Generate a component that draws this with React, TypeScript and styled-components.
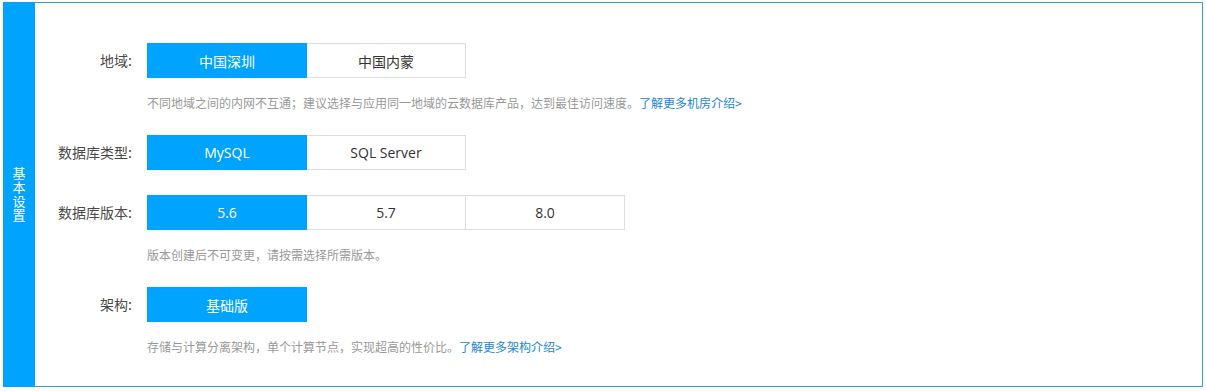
import styled, { createGlobalStyle } from 'styled-components'

const GlobalStyle = createGlobalStyle`
  body {
    margin: 0;
    background: #fff;
    font-family: "Open Sans", "Noto Sans CJK SC", sans-serif;
  }
`

const Panel = styled.div`
  display: flex;
  width: 1200px;
  height: 385px;
  margin: 2px 0 0 3px;
  box-sizing: border-box;
  border: 1px solid #2b9fe6;
  border-left: none;
`

const SideBar = styled.div`
  width: 32px;
  margin: -1px 0;
  background: #00a4ff;
  display: flex;
  align-items: center;
  justify-content: center;
`

const SideTitle = styled.span`
  writing-mode: vertical-rl;
  text-orientation: upright;
  color: #fff;
  font-size: 13px;
  letter-spacing: 1px;
  font-family: "Noto Sans CJK SC", sans-serif;
`

const Content = styled.div`
  flex: 1;
  padding-top: 40px;
`

const FormItem = styled.div<{ $gap?: number }>`
  display: flex;
  margin-bottom: ${p => p.$gap ?? 24}px;
`

const Label = styled.div`
  width: 112px;
  box-sizing: border-box;
  padding-right: 15px;
  text-align: right;
  font-size: 14px;
  line-height: 35px;
  color: #4a4a4a;
  font-family: "Noto Sans CJK SC", sans-serif;
`

const Control = styled.div`
  display: flex;
  flex-direction: column;
`

const ButtonGroup = styled.div`
  display: flex;
`

const Option = styled.button<{ $active?: boolean }>`
  width: 160px;
  height: 35px;
  box-sizing: border-box;
  padding: 0;
  margin-left: -1px;
  border: 1px solid ${p => (p.$active ? '#00a4ff' : '#dddddd')};
  background: ${p => (p.$active ? '#00a4ff' : '#fff')};
  color: ${p => (p.$active ? '#fff' : '#333')};
  font-family: "Open Sans", "Noto Sans CJK SC", sans-serif;
  font-size: 14px;
  cursor: pointer;
  position: relative;
  z-index: ${p => (p.$active ? 1 : 0)};

  &:first-child {
    margin-left: 0;
  }
`

const Help = styled.div`
  margin-top: 17px;
  font-size: 12px;
  line-height: 16px;
  color: #999;
  font-family: "Noto Sans CJK SC", sans-serif;
`

const Link = styled.a`
  color: #1a87d6;
  text-decoration: none;
`

type Row = {
  label: string
  options: string[]
  help?: string
  link?: string
  gap?: number
}

const rows: Row[] = [
  {
    label: '地域:',
    options: ['中国深圳', '中国内蒙'],
    help: '不同地域之间的内网不互通；建议选择与应用同一地域的云数据库产品，达到最佳访问速度。',
    link: '了解更多机房介绍>',
  },
  { label: '数据库类型:', options: ['MySQL', 'SQL Server'], gap: 25 },
  {
    label: '数据库版本:',
    options: ['5.6', '5.7', '8.0'],
    help: '版本创建后不可变更，请按需选择所需版本。',
  },
  {
    label: '架构:',
    options: ['基础版'],
    help: '存储与计算分离架构，单个计算节点，实现超高的性价比。',
    link: '了解更多架构介绍>',
  },
]

const App = () => {
  return (
    <>
      <GlobalStyle />
      <Panel>
        <SideBar>
          <SideTitle>基本设置</SideTitle>
        </SideBar>
        <Content>
          {rows.map(row => (
            <FormItem key={row.label} $gap={row.gap}>
              <Label>{row.label}</Label>
              <Control>
                <ButtonGroup>
                  {row.options.map((opt, i) => (
                    <Option key={opt} $active={i === 0}>
                      {opt}
                    </Option>
                  ))}
                </ButtonGroup>
                {row.help && (
                  <Help>
                    {row.help}
                    {row.link && <Link href="#">{row.link}</Link>}
                  </Help>
                )}
              </Control>
            </FormItem>
          ))}
        </Content>
      </Panel>
    </>
  )
}

export default App
